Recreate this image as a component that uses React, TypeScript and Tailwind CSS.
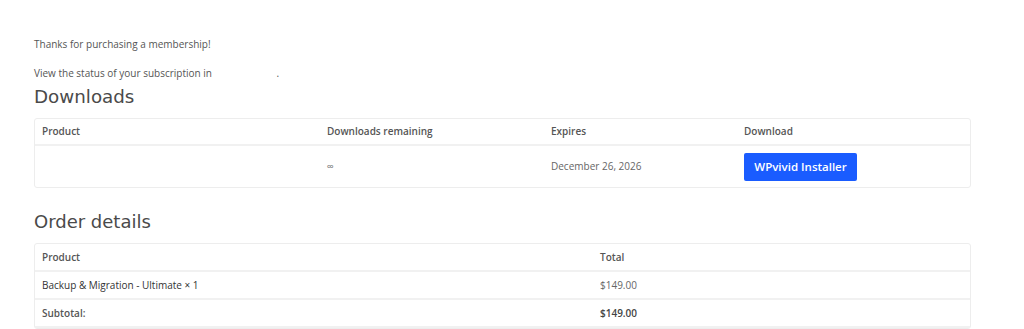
export default function App() {
  const body = { fontFamily: '"Open Sans", "Noto Sans", sans-serif' }
  const head = { fontFamily: '"DejaVu Sans", "Noto Sans", sans-serif' }

  return (
    <div className="w-[1024px] h-[329px] overflow-hidden bg-white text-[#555] pt-[35px] pl-[34px]" style={body}>
      <div className="w-[937px]">
        <p className="text-[10px] leading-[18px]">Thanks for purchasing a membership!</p>
        <p className="text-[10px] leading-[18px] mt-[11px]">
          View the status of your subscription in <span className="inline-block w-[62px]" />.
        </p>

        <h2 className="text-[18.3px] leading-[28px] mt-[1px] text-[#4a4a4a]" style={head}>
          Downloads
        </h2>

        <div className="mt-[7px] border border-[#ededed] rounded-[3px]">
          <div className="grid grid-cols-[285px_224px_193px_1fr] h-[27px] items-center border-b-2 border-[#f1f1f1] text-[10px] font-semibold text-[#555]">
            <div className="pl-[7px]">Product</div>
            <div className="pl-[7px]">Downloads remaining</div>
            <div className="pl-[7px]">Expires</div>
            <div className="pl-[7px]">Download</div>
          </div>
          <div className="grid grid-cols-[285px_224px_193px_1fr] h-[41px] items-center text-[10px] text-[#666]">
            <div className="pl-[7px]" />
            <div className="pl-[7px] text-[10px]">∞</div>
            <div className="pl-[7px]">December 26, 2026</div>
            <div className="pl-[7px]">
              <button className="w-[113px] h-[28px] rounded-[2px] bg-[#1a5cff] text-white text-[11.5px] font-semibold">
                WPvivid Installer
              </button>
            </div>
          </div>
        </div>

        <h2 className="text-[18px] leading-[28px] mt-[20px] text-[#4a4a4a]" style={head}>
          Order details
        </h2>

        <div className="mt-[7px] border border-[#ededed] rounded-[3px] text-[10px]">
          <div className="grid grid-cols-[558px_1fr] h-[28px] items-center border-b-2 border-[#f1f1f1] font-semibold text-[#555]">
            <div className="pl-[7px]">Product</div>
            <div className="pl-[7px]">Total</div>
          </div>
          <div className="grid grid-cols-[558px_1fr] h-[28px] items-center border-b-2 border-[#f1f1f1]">
            <div className="pl-[7px] text-[#333]">Backup &amp; Migration - Ultimate × 1</div>
            <div className="pl-[7px] text-[#666]">$149.00</div>
          </div>
          <div className="grid grid-cols-[558px_1fr] h-[28px] items-center border-b-2 border-[#f1f1f1] font-semibold">
            <div className="pl-[7px] text-[#555]">Subtotal:</div>
            <div className="pl-[7px] text-[#444]">$149.00</div>
          </div>
        </div>
      </div>
    </div>
  )
}
